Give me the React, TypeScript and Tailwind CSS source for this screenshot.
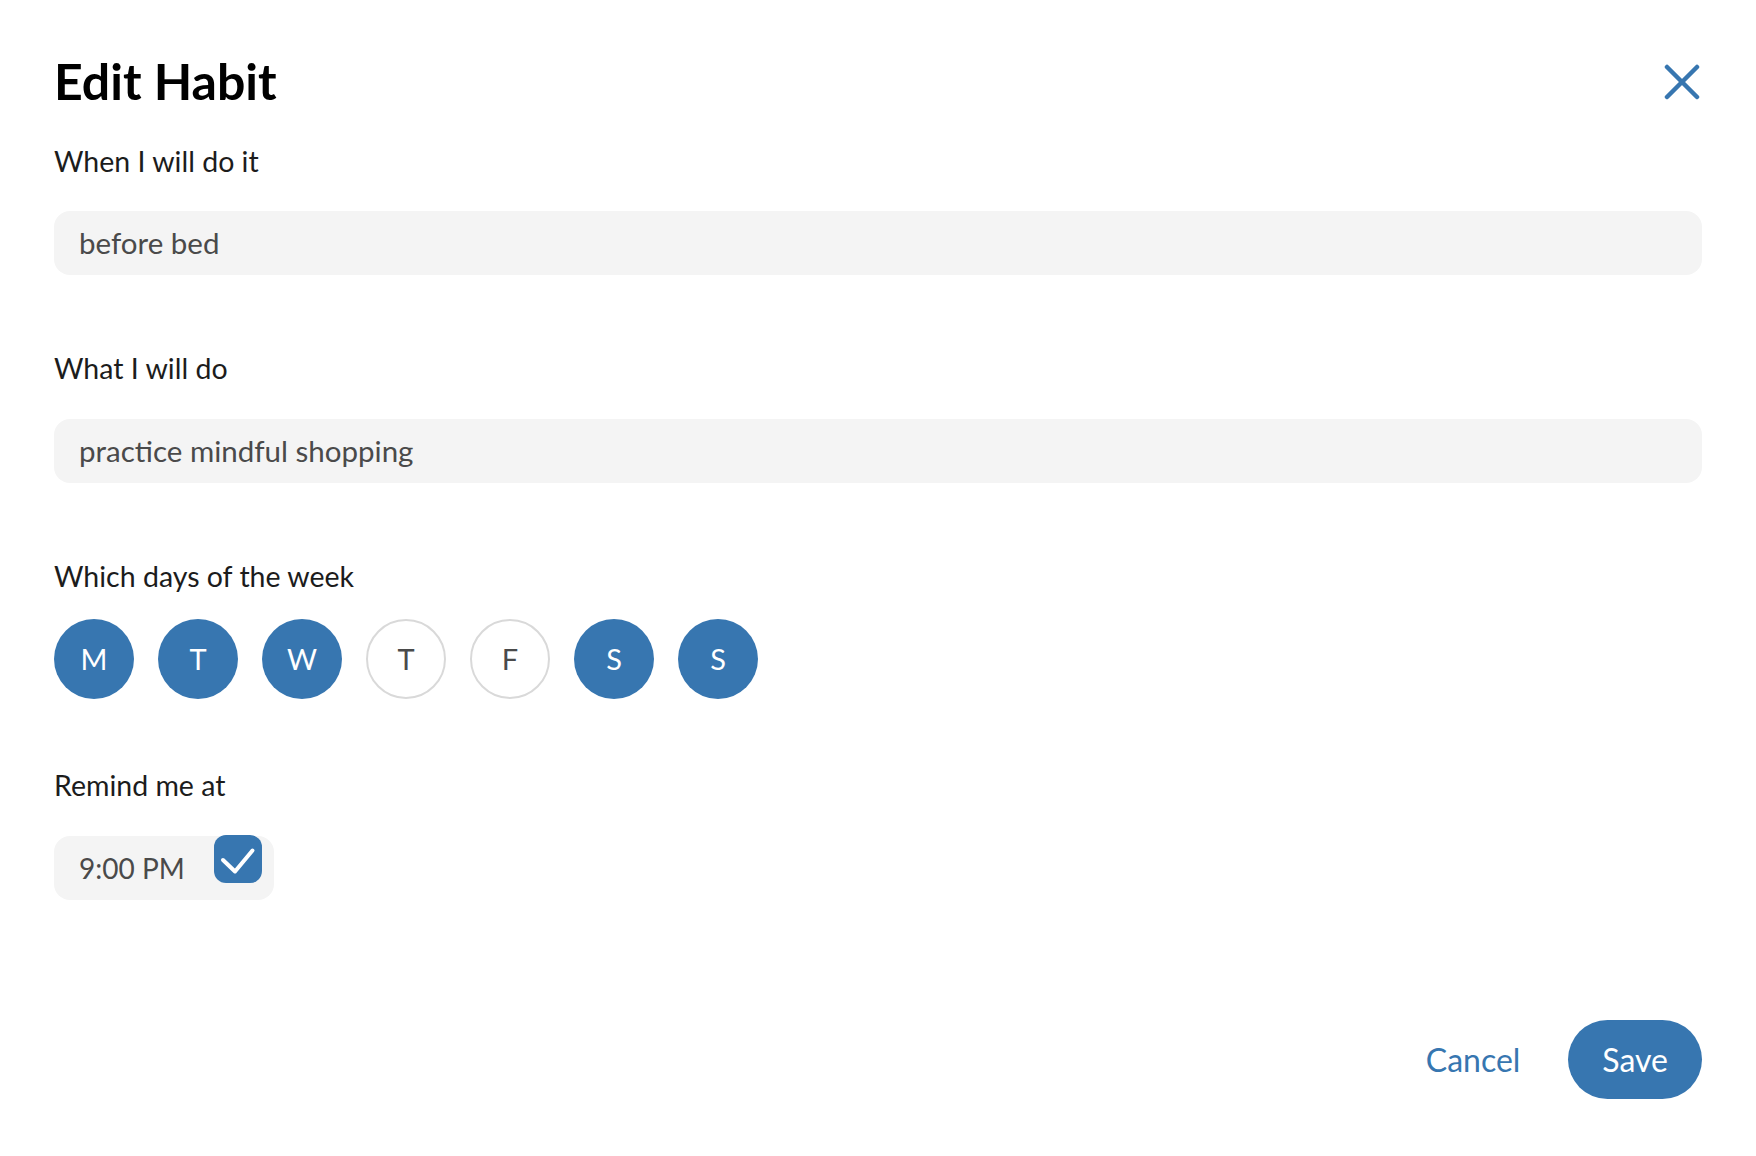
import React from "react";

const BLUE = "#3776b0";

const days = [
  { l: "M", on: true },
  { l: "T", on: true },
  { l: "W", on: true },
  { l: "T", on: false },
  { l: "F", on: false },
  { l: "S", on: true },
  { l: "S", on: true },
];

export default function App() {
  return (
    <div
      className="h-[1156px] w-full bg-white px-[54px] pt-[53px] flex flex-col text-[#1c1c1c]"
      style={{ fontFamily: "Lato, 'Open Sans', sans-serif" }}
    >
      <div className="flex items-center justify-between h-[56px]">
        <h1 className="text-[50px] leading-[56px] font-bold text-black">Edit Habit</h1>
        <button className="mr-[2px] mt-[2px]" aria-label="Close">
          <svg width="36" height="36" viewBox="0 0 36 36">
            <line x1="3" y1="3" x2="33" y2="33" stroke={BLUE} strokeWidth="4.5" strokeLinecap="round" />
            <line x1="33" y1="3" x2="3" y2="33" stroke={BLUE} strokeWidth="4.5" strokeLinecap="round" />
          </svg>
        </button>
      </div>

      <div className="mt-[35px] text-[28.5px] leading-[34px]">When I will do it</div>
      <div className="mt-[33px] h-[64px] rounded-2xl bg-[#f4f4f4] px-[25px] flex items-center text-[29.5px] text-[#4a4a4a]">
        before bed
      </div>

      <div className="mt-[76px] text-[28.5px] leading-[34px]">What I will do</div>
      <div className="mt-[34px] h-[64px] rounded-2xl bg-[#f4f4f4] px-[25px] flex items-center text-[29.5px] text-[#4a4a4a]">
        practice mindful shopping
      </div>

      <div className="mt-[76px] text-[28.5px] leading-[34px]">Which days of the week</div>
      <div className="mt-[26px] flex gap-[24px]">
        {days.map((d, i) =>
          d.on ? (
            <div
              key={i}
              className="w-[80px] h-[80px] rounded-full bg-[#3776b0] text-white flex items-center justify-center text-[29px]"
            >
              {d.l}
            </div>
          ) : (
            <div
              key={i}
              className="w-[80px] h-[80px] rounded-full border-2 border-[#d9d9d9] bg-white text-[#4a4a4a] flex items-center justify-center text-[29px]"
            >
              {d.l}
            </div>
          )
        )}
      </div>

      <div className="mt-[69px] text-[28.5px] leading-[34px]">Remind me at</div>
      <div className="mt-[34px] relative w-[220px] h-[64px] rounded-2xl bg-[#f4f4f4] px-[25px] flex items-center text-[28px] text-[#4a4a4a]">
        9:00 PM
        <div className="absolute -top-[1px] right-[12px] w-[48px] h-[48px] rounded-[12px] bg-[#3776b0] flex items-center justify-center">
          <svg width="48" height="48" viewBox="0 0 48 48">
            <polyline
              points="9,25 21,36.5 38.5,15.5"
              fill="none"
              stroke="white"
              strokeWidth="4"
              strokeLinecap="round"
              strokeLinejoin="round"
            />
          </svg>
        </div>
      </div>

      <div className="mt-auto pb-[57px] flex justify-end items-center gap-[48px]">
        <button className="text-[32px] text-[#3776b0]">Cancel</button>
        <button className="h-[79px] px-[34px] rounded-full bg-[#3776b0] text-white text-[32px]">Save</button>
      </div>
    </div>
  );
}
